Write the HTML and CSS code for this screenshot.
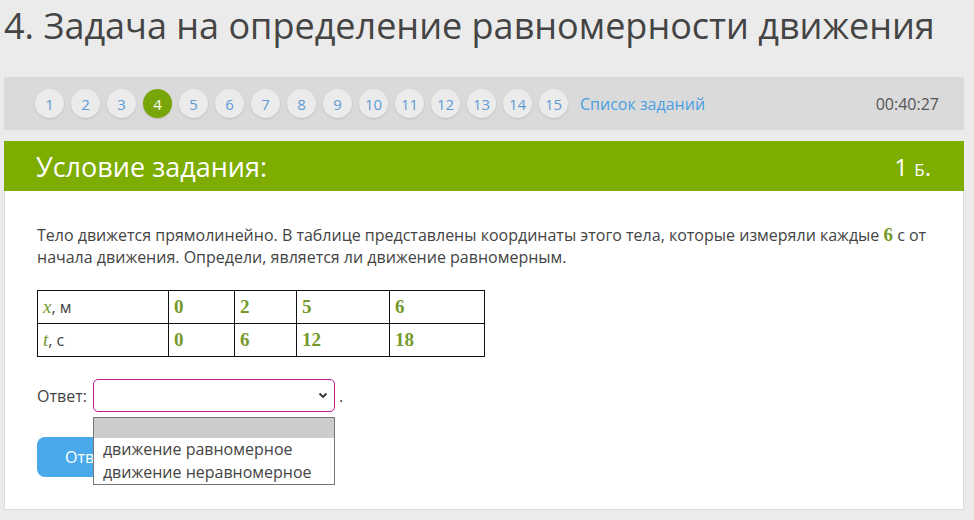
FILE: index.html
```html
<!DOCTYPE html>
<html lang="ru">
<head>
  <meta charset="UTF-8" />
  <title>Задача на определение равномерности движения</title>
  <link rel="stylesheet" href="styles.css">
</head>
<body>

<div class="page">
  <h1 class="task-title">4. Задача на определение равномерности движения</h1>

  <!-- Task navigation -->
  <div class="task-nav">
    <a class="num">1</a>
    <a class="num">2</a>
    <a class="num">3</a>
    <a class="num current">4</a>
    <a class="num">5</a>
    <a class="num">6</a>
    <a class="num">7</a>
    <a class="num">8</a>
    <a class="num">9</a>
    <a class="num">10</a>
    <a class="num">11</a>
    <a class="num">12</a>
    <a class="num">13</a>
    <a class="num">14</a>
    <a class="num">15</a>
    <a class="task-list">Список заданий</a>
    <span class="timer">00:40:27</span>
  </div>

  <!-- Task card -->
  <div class="card">
    <div class="card-head">
      <span class="head-title">Условие задания:</span>
      <span class="points">1 <span class="sc">б.</span></span>
    </div>

    <div class="card-body">
      <p class="text">Тело движется прямолинейно. В таблице представлены координаты этого тела, которые измеряли каждые <span class="m">6</span> с от начала движения. Определи, является ли движение равномерным.</p>

      <table class="data">
        <tr>
          <td class="c1"><span class="mi">x</span>, м</td>
          <td class="c2 m">0</td>
          <td class="c3 m">2</td>
          <td class="c4 m">5</td>
          <td class="c5 m">6</td>
        </tr>
        <tr>
          <td class="c1"><span class="mi">t</span>, с</td>
          <td class="m">0</td>
          <td class="m">6</td>
          <td class="m">12</td>
          <td class="m">18</td>
        </tr>
      </table>

      <div class="answer">
        <span class="answer-label">Ответ:</span>
        <div class="select">
          <div class="select-box">
            <svg width="10" height="7" viewBox="0 0 10 7"><path d="M1.5 1.5 L5 5 L8.5 1.5" fill="none" stroke="#333" stroke-width="1.8"/></svg>
          </div>
          <div class="options">
            <div class="opt hl"></div>
            <div class="opt">движение равномерное</div>
            <div class="opt">движение неравномерное</div>
          </div>
        </div>
        <span class="dot">.</span>
      </div>

      <button class="submit">Ответить</button>
    </div>
  </div>
</div>

</body>
</html>
```

FILE: styles.css
```css
body {
  margin: 0;
  background: #ebebeb;
  font-family: "Open Sans", Arial, sans-serif;
  color: #444;
}

.page {
  width: 960px;
  padding-left: 4px;
}

.task-title {
  margin: 0;
  padding-top: 4px;
  height: 73px;
  font-size: 36px;
  font-weight: 400;
  line-height: 44px;
  color: #444;
}

.task-nav {
  display: flex;
  align-items: center;
  gap: 7px;
  height: 53px;
  padding-left: 31px;
  padding-right: 25px;
  background: #dadada;
  box-sizing: border-box;
}

.num {
  width: 29px;
  height: 29px;
  border-radius: 50%;
  background: #ebebeb;
  box-shadow: 0 1px 2px rgba(0,0,0,0.12);
  color: #5e9bd6;
  font-size: 15px;
  display: flex;
  align-items: center;
  justify-content: center;
}

.num.current {
  background: #78a60a;
  color: white;
}

.task-list {
  margin-left: 5px;
  color: #4a9ee2;
  font-size: 16px;
}

.timer {
  margin-left: auto;
  font-size: 16px;
  color: #555;
}

.card {
  margin-top: 11px;
  background: white;
  border: 1px solid #dcdcdc;
  border-top: none;
  width: 960px;
  box-sizing: border-box;
}

.card-head {
  display: flex;
  justify-content: space-between;
  align-items: center;
  height: 50px;
  padding: 0 33px 0 32px;
  background: #7dad00;
  color: white;
  margin: 0 -1px;
}

.head-title {
  font-size: 27px;
}

.points {
  font-size: 24px;
}

.sc {
  font-variant: small-caps;
}

.card-body {
  padding: 33px 32px 32px 32px;
}

.text {
  margin: 0 0 22px 0;
  font-size: 16px;
  line-height: 22px;
  color: #444;
}

.m {
  font-family: "Liberation Serif", "DejaVu Serif", serif;
  color: #74992a;
  font-weight: bold;
  font-size: 19px;
}

.text .m {
  line-height: 0;
}

.mi {
  font-family: "Liberation Serif", "DejaVu Serif", serif;
  font-style: italic;
  color: #74992a;
  font-size: 19px;
  line-height: 0;
}

.data {
  border-collapse: collapse;
  font-size: 16px;
}

.data td {
  border: 1px solid #111;
  height: 32px;
  padding: 0 5px;
  vertical-align: middle;
}

.c1 { width: 120px; }
.c2 { width: 55px; }
.c3 { width: 51px; }
.c4 { width: 82px; }
.c5 { width: 84px; }

.answer {
  display: flex;
  align-items: center;
  margin-top: 22px;
  font-size: 16px;
}

.answer-label {
  margin-right: 6px;
}

.dot {
  margin-left: 4px;
}

.select {
  position: relative;
}

.select-box {
  width: 242px;
  height: 33px;
  box-sizing: border-box;
  border: 1px solid #c0178c;
  border-radius: 5px;
  background: white;
  display: flex;
  align-items: center;
  justify-content: flex-end;
  padding-right: 6px;
}

.options {
  position: absolute;
  left: 0;
  top: 38px;
  width: 242px;
  box-sizing: border-box;
  border: 1px solid #767676;
  background: white;
  z-index: 2;
}

.opt {
  height: 23px;
  line-height: 23px;
  padding-left: 9px;
  font-size: 16px;
  color: #444;
}

.opt.hl {
  height: 20px;
  background: #cccccc;
}

.submit {
  margin-top: 25px;
  height: 40px;
  padding: 0 28px;
  border: none;
  border-radius: 8px;
  background: #4aa9ea;
  color: white;
  font-family: "Open Sans", Arial, sans-serif;
  font-size: 16px;
}
```
